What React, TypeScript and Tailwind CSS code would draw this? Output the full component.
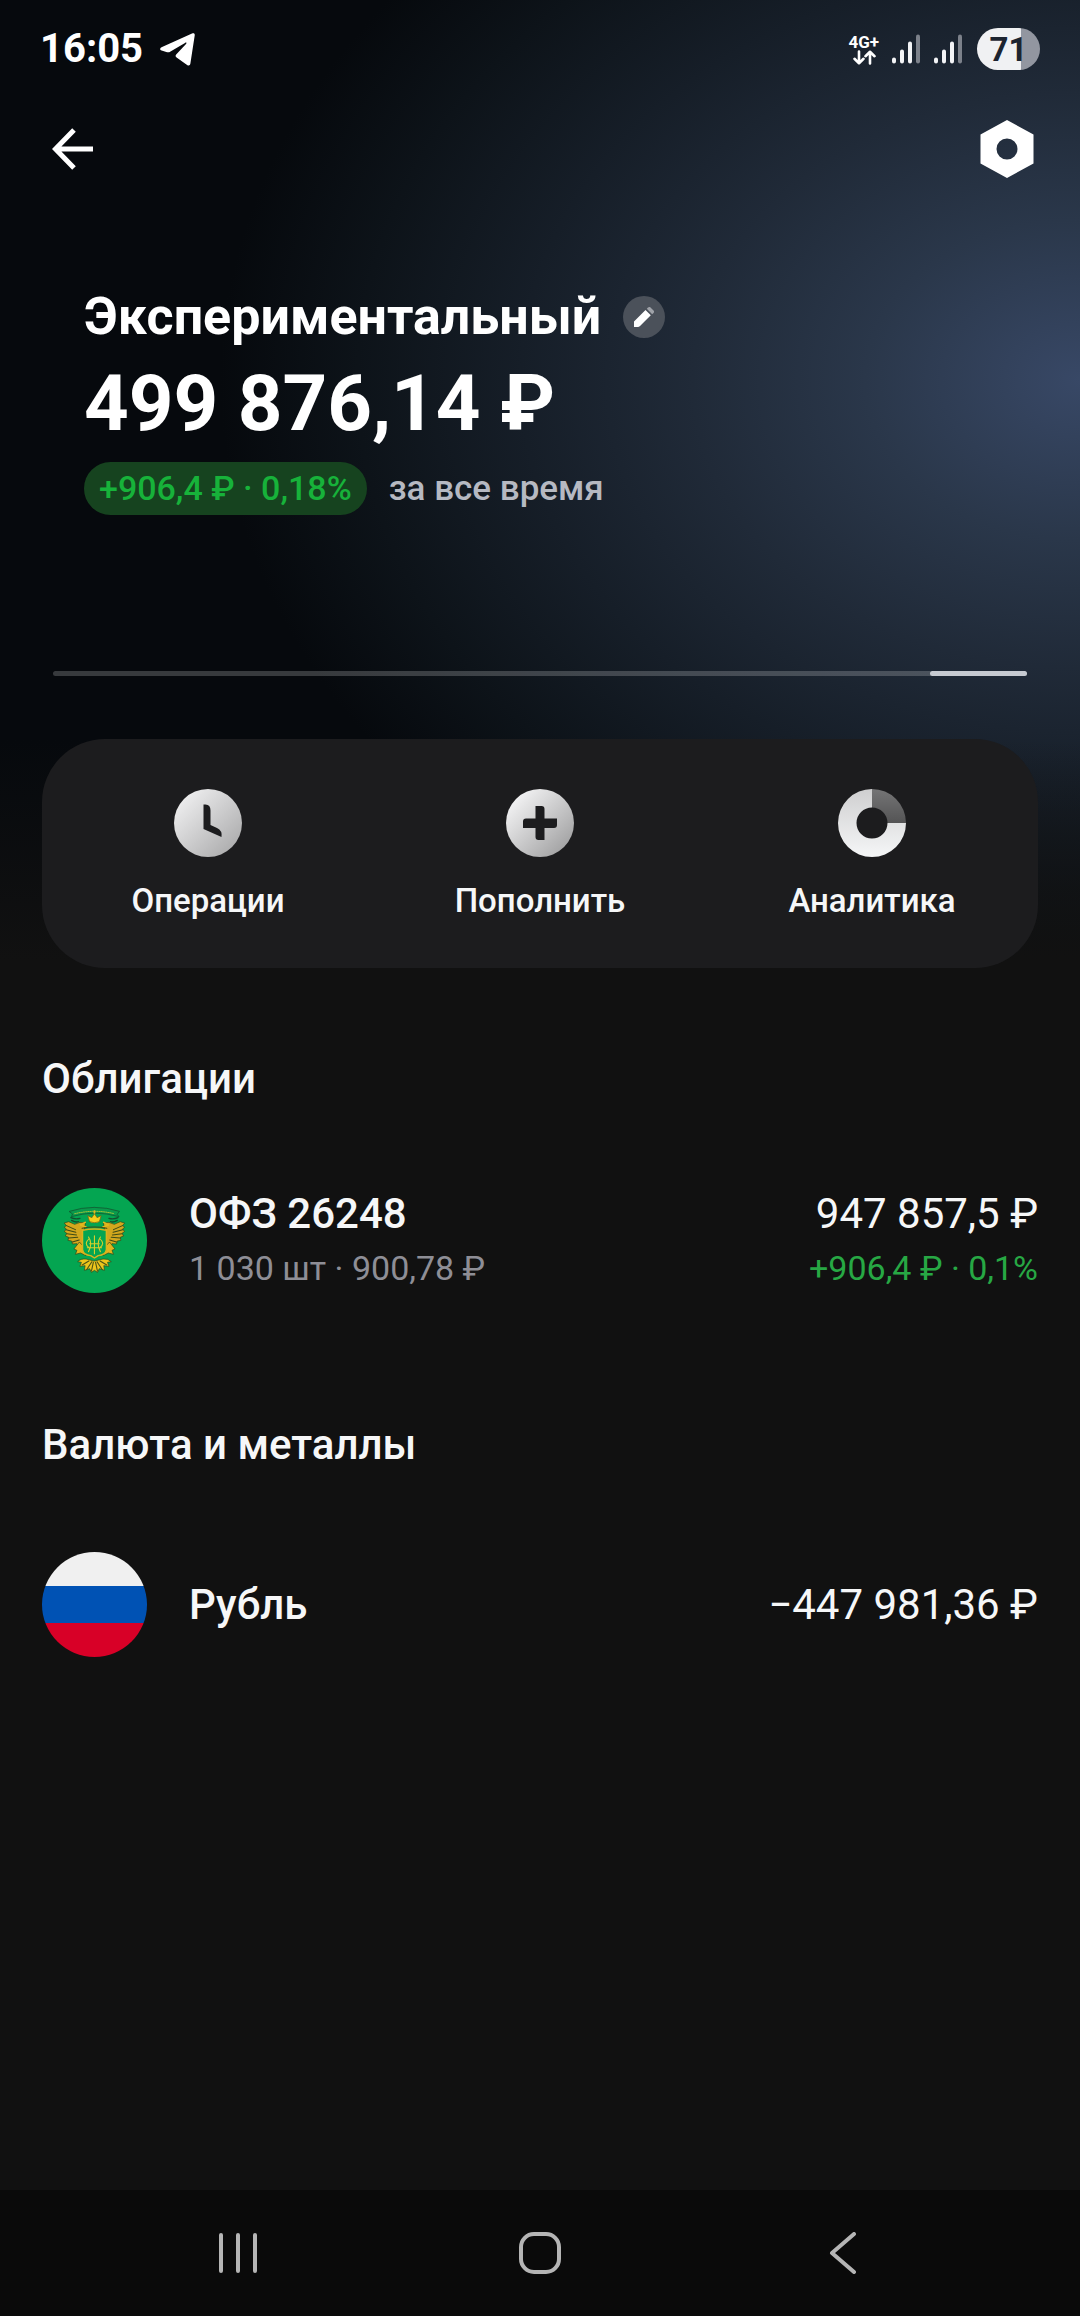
import type { ReactNode } from "react";

type Position = {
  name: string;
  details?: string;
  total: string;
  profit?: string;
  icon: ReactNode;
};

const SignalIcon = () => (
  <svg width="30" height="30" viewBox="0 0 30 30" strokeWidth="4" strokeLinecap="round" stroke="#f3f4f6">
    <path d="M3 25.500v2M11 17.500v10M19 9.500v18" />
    <path d="M27 2.500v25" stroke="#7c818a" />
  </svg>
);

const StatusBar = () => (
  <div className="flex h-[98px] items-center justify-between px-10">
    <div className="flex items-center gap-4">
      <span className="text-[40px] font-bold leading-none text-white">16:05</span>
      <svg width="38" height="34" viewBox="0 0 38 34" fill="#fff">
        <path d="M2.500 15.200 33 1.600c2-.8 3 .1 2.700 2l-4.300 28c-.3 2-1.700 2.500-3.300 1.400l-10.500-7.500c-1.300-1-1.300-2-.2-3.200l9.600-10.400c1-1.200.2-1.800-1-1L11.500 19.500c-1.500 1-2.500 1-4.200.6l-4.700-1.500c-1.900-.6-1.900-2.500-.1-3.400z" />
      </svg>
    </div>
    <div className="flex items-center">
      <div className="flex flex-col items-center">
        <span className="text-[17px] font-bold leading-4 text-white">4G+</span>
        <svg width="24" height="15" viewBox="0 0 24 15" fill="none" stroke="#fff" strokeWidth="2.600" strokeLinecap="round" strokeLinejoin="round">
          <path d="M7 1.500v11.500M2.500 8.800 7 13.200l4.500-4.400M18 13.500V2M13.500 6.200 18 1.800l4.500 4.400" />
        </svg>
      </div>
      <div className="ml-3 flex gap-3">
        <SignalIcon />
        <SignalIcon />
      </div>
      <div className="ml-[14px] flex h-[42px] w-[63px] items-center justify-center rounded-full bg-linear-to-r from-[#f0f1f3] from-70% to-[#9296a0] to-70%">
        <span className="text-[33px] font-bold leading-none text-[#1c2430]">71</span>
      </div>
    </div>
  </div>
);

const Emblem = () => (
  <svg className="size-[105px] shrink-0 rounded-full" viewBox="0 0 315 315">
    <rect width="315" height="315" fill="#04a551" />
    <g transform="translate(42 39) scale(1.12 1)" strokeLinejoin="round" strokeLinecap="round">
      {/* ribbon */}
      <path d="M36 31q66-24 134 0l-6 9 5 7q-65-21-128 0l3-7z" fill="#0a9a4c" stroke="#13502d" strokeWidth="2" />
      <path d="M50 38q53-14 106 0" fill="none" stroke="#9bbf3a" strokeWidth="3" strokeDasharray="3 3" />
      <path d="M40 50q12 6 24 2m-22 6q10 7 18 4M166 50q-12 6-24 2m22 6q-10 7-18 4" fill="none" stroke="#13502d" strokeWidth="4" />
      {/* wings */}
      <path d="M78 66q-14-6-28 4l-16-8-12 4 6 8-6 4 6 7-6 6 7 6-4 8 9 4-2 9 10 2 2 9 12-1 6 12 14-6V86z" fill="#d3a71d" stroke="#2f4a1c" strokeWidth="2" />
      <path d="M128 66q14-6 28 4l16-8 12 4-6 8 6 4-6 7 6 6-7 6 4 8-9 4 2 9-10 2-2 9-12-1-6 12-14-6V86z" fill="#d3a71d" stroke="#2f4a1c" strokeWidth="2" />
      <path d="M28 74l24 12M27 86l26 8M29 98l26 4M34 111l24-2M44 123l18-6M178 74l-24 12M179 86l-26 8M177 98l-26 4M172 111l-24-2M162 123l-18-6" stroke="#3d4a16" strokeWidth="3" />
      {/* crown */}
      <path d="M90 62l-5-18 11 6 7-12 7 12 11-6-5 18q-13 7-26 0z" fill="#f3cf1d" stroke="#7a6312" strokeWidth="2" />
      <path d="M103 36v-6M78 64l-12 8 14 6M128 64l12 8-14 6" fill="none" stroke="#e2b81c" strokeWidth="5" />
      {/* legs */}
      <path d="M62 124l-14 20 8 4-4 12 14-4 14 8-4-24zM144 124l14 20-8 4 4 12-14-4-14 8 4-24z" fill="#e0b61c" stroke="#2f4a1c" strokeWidth="2" />
      {/* shield */}
      <path d="M71 88q32-8 64 0v58q-2 16-22 18l-10 7-10-7q-20-2-22-18z" fill="#04a551" stroke="#d9b41d" strokeWidth="4" />
      <path d="M70 82q33-8 66 0" fill="none" stroke="#3d4a16" strokeWidth="3" />
      <path d="M103 104v54M87 108q12 18 0 44M119 108q-12 18 0 44M84 140h38M88 114q-14 13 0 26M118 114q14 13 0 26M90 128h26" fill="none" stroke="#d5cf2c" strokeWidth="3" />
      {/* tail */}
      <path d="M80 174q-14-2-22 8l10 2-4 12 14-2-2 14 14-5 5 11 8-6 8 6 5-11 14 5-2-14 14 2-4-12 10-2q-8-10-22-8l-23 6z" fill="#edc51c" stroke="#2f4a1c" strokeWidth="2" />
      <path d="M96 182l-14 24M110 182l14 24M100 184l-5 26M106 184l5 26M88 180l-18 12M118 180l18 12" stroke="#4c5416" strokeWidth="3" />
    </g>
  </svg>
);

const RubleFlag = () => (
  <div className="flex size-[105px] shrink-0 flex-col overflow-hidden rounded-full">
    <div className="h-[34px] bg-[#f0f0f0]" />
    <div className="h-[37px] bg-[#0052b4]" />
    <div className="h-[34px] bg-[#d80027]" />
  </div>
);

const OperationsIcon = () => (
  <svg width="68" height="68" viewBox="0 0 68 68">
    <defs>
      <linearGradient id="clock" x1="0" y1="0" x2="1" y2="1">
        <stop offset="0.150" stopColor="#ebebec" />
        <stop offset="0.850" stopColor="#b0b0b1" />
      </linearGradient>
    </defs>
    <circle cx="34" cy="34" r="34" fill="url(#clock)" />
    <path d="M29.500 15.500h2q5 0 5 6V36l6.500 3q5.500 2.500 4.500 9L29.500 40z" fill="#1c1c1e" />
  </svg>
);

const DepositIcon = () => (
  <svg width="68" height="68" viewBox="0 0 68 68">
    <defs>
      <linearGradient id="plus" x1="0" y1="0" x2="1" y2="1">
        <stop offset="0.150" stopColor="#f0f0f1" />
        <stop offset="0.850" stopColor="#a6a6a7" />
      </linearGradient>
    </defs>
    <circle cx="34" cy="34" r="34" fill="url(#plus)" />
    <path d="M29.500 17h6q3 0 3 3v9.500H51V36q0 3-3 3h-9.500v12h-6q-3 0-3-3v-9H17v-6.500q0-3 3-3h9.500z" fill="#1c1c1e" />
  </svg>
);

const AnalyticsIcon = () => (
  <svg width="68" height="68" viewBox="0 0 68 68">
    <defs>
      <linearGradient id="ring" x1="0" y1="0" x2="0" y2="1">
        <stop offset="0" stopColor="#cfcfd0" />
        <stop offset="1" stopColor="#f5f6f7" />
      </linearGradient>
      <linearGradient id="slice" x1="0" y1="0" x2="0" y2="1">
        <stop offset="0" stopColor="#757576" />
        <stop offset="1" stopColor="#545455" />
      </linearGradient>
    </defs>
    <path d="M34 0A34 34 0 1 0 68 34H49.500A15.500 15.500 0 1 1 34 18.500z" fill="url(#ring)" />
    <path d="M34 0A34 34 0 0 1 68 34H49.500A15.500 15.500 0 0 0 34 18.500z" fill="url(#slice)" />
  </svg>
);

const actions = [
  { label: "Операции", icon: <OperationsIcon /> },
  { label: "Пополнить", icon: <DepositIcon /> },
  { label: "Аналитика", icon: <AnalyticsIcon /> },
];

const bonds: Position[] = [
  {
    name: "ОФЗ 26248",
    details: "1 030 шт · 900,78 ₽",
    total: "947 857,5 ₽",
    profit: "+906,4 ₽ · 0,1%",
    icon: <Emblem />,
  },
];

const currencies: Position[] = [{ name: "Рубль", total: "−447 981,36 ₽", icon: <RubleFlag /> }];

const Section = ({ title, items }: { title: string; items: Position[] }) => (
  <section className="flex flex-col gap-[82px] px-[42px]">
    <h2 className="text-[42px] font-medium leading-[50px]">{title}</h2>
    {items.map((item) => (
      <div key={item.name} className="flex items-center gap-[42px]">
        {item.icon}
        <div className="flex-1">
          <div className="text-[42px] font-medium leading-[56px]">{item.name}</div>
          {item.details && <div className="text-[34px] leading-[52px] text-[#8e8e96]">{item.details}</div>}
        </div>
        <div className="text-right">
          <div className="text-[42px] leading-[56px]">{item.total}</div>
          {item.profit && <div className="text-[34px] leading-[52px] text-[#27a844]">{item.profit}</div>}
        </div>
      </div>
    ))}
  </section>
);

export default function App() {
  return (
    <div className="flex min-h-screen flex-col bg-[#111111] bg-[linear-gradient(to_bottom,transparent_740px,#111111_960px),radial-gradient(860px_640px_at_100%_380px,#384866_0%,#2a374a_25%,#202a38_45%,#161e28_65%,#0d1319_84%,#06090d_100%)] font-['Roboto','Noto_Sans',sans-serif] text-[#f6f7f8]">
      <StatusBar />

      <header className="flex h-[102px] items-center justify-between pl-[52px] pr-[46px]">
        <button aria-label="Назад">
          <svg width="42" height="42" viewBox="0 0 42 42" fill="none" stroke="#fff" strokeWidth="5">
            <path d="M22 2 3.500 21 22 40M4 21h37" />
          </svg>
        </button>
        <button aria-label="Настройки">
          <svg width="54" height="58" viewBox="0 0 54 58">
            <path d="M27 0 53.500 14.500v29L27 58 .5 43.500v-29zM27 18.500a10.500 10.500 0 1 0 0 21 10.500 10.500 0 0 0 0-21z" fill="#fff" fillRule="evenodd" />
          </svg>
        </button>
      </header>

      <main className="flex flex-1 flex-col">
        <div className="px-[84px] pt-[84px] text-white">
          <div className="flex items-center gap-[22px]">
            <h1 className="text-[52px] font-bold leading-[66px]">Экспериментальный</h1>
            <button aria-label="Переименовать" className="flex size-[42px] items-center justify-center rounded-full bg-[#4b515a]">
              <svg width="20" height="20" viewBox="0 0 20 20">
                <path d="M0 14.500 11.500 3l5.300 5.300L6 19Q5 20 4 20H0z" fill="#fff" />
                <path d="M12.800 1.700 14 .5q.5-.5 1.500-.5H16l4 4v.5q0 1-.5 1.500l-1.300 1.200z" fill="#a0a3a9" />
              </svg>
            </button>
          </div>
          <div className="mt-2 text-[78px] font-bold leading-[92px]">499 876,14 ₽</div>
          <div className="mt-3 flex items-center gap-[22px]">
            <span className="rounded-full bg-[#16431f] px-[15px] text-[34px] font-medium leading-[53px] text-[#17b23a]">+906,4 ₽ · 0,18%</span>
            <span className="text-[35px] font-medium leading-[53px] text-[#b6b9c2]">за все время</span>
          </div>
        </div>

        <div className="mx-[53px] mt-[156px] flex h-[5px] justify-end rounded-full bg-white/20">
          <div className="w-1/10 rounded-full bg-[#c6cad1]" />
        </div>

        <div className="mx-[42px] mt-[63px] grid h-[229px] grid-cols-3 rounded-[63px] bg-[#1c1c1e]">
          {actions.map((action) => (
            <button key={action.label} className="flex flex-col items-center gap-[22px] pt-[50px] text-[33px] font-medium leading-[44px]">
              {action.icon}
              {action.label}
            </button>
          ))}
        </div>

        <div className="mt-[86px] flex flex-col gap-[126px]">
          <Section title="Облигации" items={bonds} />
          <Section title="Валюта и металлы" items={currencies} />
        </div>
      </main>

      <nav className="flex h-[126px] items-center justify-center gap-[260px] bg-[#0a0a0a]">
        <button aria-label="Недавние">
          <svg width="42" height="42" viewBox="0 0 42 42" stroke="#b5b5b5" strokeWidth="4" strokeLinecap="round">
            <path d="M4 3v36M21 3v36M38 3v36" />
          </svg>
        </button>
        <button aria-label="Домой">
          <svg width="42" height="42" viewBox="0 0 42 42" fill="none" stroke="#b5b5b5" strokeWidth="4">
            <rect x="2" y="2" width="38" height="38" rx="13" />
          </svg>
        </button>
        <button aria-label="Назад">
          <svg width="42" height="42" viewBox="0 0 42 42" fill="none" stroke="#b5b5b5" strokeWidth="4" strokeLinecap="round" strokeLinejoin="round">
            <path d="M33 2 11 21l22 19" />
          </svg>
        </button>
      </nav>
    </div>
  );
}
